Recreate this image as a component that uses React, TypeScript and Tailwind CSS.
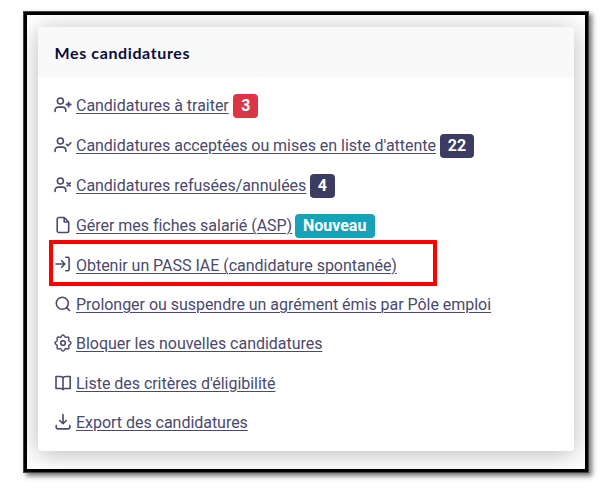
import type { ReactNode } from "react";

const Icon = ({ children }: { children: ReactNode }) => (
  <svg
    viewBox="0 0 18 18"
    className="h-[18px] w-[18px] shrink-0"
    fill="none"
    stroke="currentColor"
    strokeWidth="1.6"
    strokeLinecap="round"
    strokeLinejoin="round"
  >
    {children}
  </svg>
);

const person = (
  <>
    <circle cx="6.4" cy="5" r="3" />
    <path d="M1.1 15.5v-1.2a3.2 3.2 0 0 1 3.2-3.2h4.3a3.2 3.2 0 0 1 3.2 3.2v1.2" />
  </>
);

// Outline of a gear with eight rounded teeth.
const gearPoints = Array.from({ length: 96 }, (_, i) => {
  const angle = (i / 96) * Math.PI * 2;
  const radius = 7.1 + 0.85 * Math.cos(8 * angle);
  return `${(9 + radius * Math.sin(angle)).toFixed(2)},${(9 - radius * Math.cos(angle)).toFixed(2)}`;
}).join(" ");

const icons = {
  add: <Icon>{person}<path strokeWidth="1.8" d="M14.6 6.3v4.4M12.4 8.5h4.4" /></Icon>,
  check: <Icon>{person}<path d="m12.5 8.4 1.4 1.4 2.9-2.9" /></Icon>,
  cross: <Icon>{person}<path strokeWidth="1.7" d="m13.1 6.8 3.1 3.1M16.2 6.8l-3.1 3.1" /></Icon>,
  file: <Icon><path d="M10.2 1.5H4.9a1.7 1.7 0 0 0-1.7 1.7v11.6a1.7 1.7 0 0 0 1.7 1.7h8.1a1.7 1.7 0 0 0 1.7-1.7V6zM10.2 1.5V6h4.5" /></Icon>,
  enter: <Icon><path d="M1.9 9h8.9M7.6 5.7 10.9 9l-3.3 3.3M11.8 2.3h2.1c.8 0 1.2.4 1.2 1.2v11c0 .8-.4 1.2-1.2 1.2h-2.1" /></Icon>,
  search: <Icon><circle cx="8.3" cy="8.3" r="6" /><path d="m12.6 12.6 2.9 2.9" /></Icon>,
  gear: (
    <Icon>
      <circle cx="9" cy="9" r="2.3" />
      <polygon strokeWidth="1.4" points={gearPoints} />
    </Icon>
  ),
  book: <Icon><path d="M9 4.2v11.6M9 4.2C8.6 2.9 7.8 2.5 6.5 2.5H2v12h5c1.1 0 2 .3 2 1.3 0-1 .9-1.3 2-1.3h5.2v-12h-4.7C10.2 2.5 9.4 2.9 9 4.2Z" /></Icon>,
  download: <Icon><path d="M9 1.5v9.2M5.7 7.5 9 10.8l3.3-3.3M2.2 12.5v1.8c0 1.1.7 1.6 1.8 1.6h10c1.1 0 1.8-.5 1.8-1.6v-1.8" /></Icon>,
};

type Item = {
  icon: ReactNode;
  label: string;
  badge?: string;
  badgeStyle?: string;
  highlighted?: boolean;
};

const items: Item[] = [
  { icon: icons.add, label: "Candidatures à traiter", badge: "3", badgeStyle: "bg-[#dc3545] w-[25px] ml-[4.5px]" },
  { icon: icons.check, label: "Candidatures acceptées ou mises en liste d'attente", badge: "22", badgeStyle: "bg-[#3c3b62] w-[34px] ml-[4px]" },
  { icon: icons.cross, label: "Candidatures refusées/annulées", badge: "4", badgeStyle: "bg-[#3c3b62] w-[25px] ml-[3.5px]" },
  { icon: icons.file, label: "Gérer mes fiches salarié (ASP)", badge: "Nouveau", badgeStyle: "bg-[#17a2b8] w-[80px] ml-[2.5px]" },
  { icon: icons.enter, label: "Obtenir un PASS IAE (candidature spontanée)", highlighted: true },
  { icon: icons.search, label: "Prolonger ou suspendre un agrément émis par Pôle emploi" },
  { icon: icons.gear, label: "Bloquer les nouvelles candidatures" },
  { icon: icons.book, label: "Liste des critères d'éligibilité" },
  { icon: icons.download, label: "Export des candidatures" },
];

function Row({ item }: { item: Item }) {
  return (
    <li className={`relative flex items-center ${item.badge ? "h-10" : "h-[39.5px]"}`}>
      <span className="-mt-0.5 mr-1 flex">{item.icon}</span>
      <a className={`whitespace-nowrap tracking-[-0.03px] underline decoration-1 underline-offset-2 ${item.badge || item.highlighted ? "mt-px" : ""}`}>
        {item.label}
      </a>
      {item.badge && (
        <span className={`mt-px flex h-6 items-center justify-center rounded-[4px] font-bold text-white ${item.badgeStyle}`}>
          {item.badge}
        </span>
      )}
      {item.highlighted && (
        <span className="pointer-events-none absolute -left-[5px] -top-[5.5px] h-[46px] w-[388px] border-4 border-[#ff0000]" />
      )}
    </li>
  );
}

export default function App() {
  return (
    <main className="h-[493px] w-[603px] bg-white pl-[23px] pt-[11px] font-['Roboto','Liberation_Sans',sans-serif]">
      <div className="h-[462px] w-[566px] border border-[#444] bg-black p-[3px] shadow-[3px_3px_5px_rgba(0,0,0,0.55)]">
        <div className="h-[454px] w-[558px] overflow-hidden bg-white pl-[11px] pt-[12px]">
          <section className="h-[424px] w-[536px] overflow-hidden rounded-[4px] bg-white shadow-[0_3px_24px_rgba(0,0,0,0.28)]">
            <h2 className="flex h-[50px] items-center bg-[#f9f9f9] pl-[16.5px] pt-[2px] font-['Lato','Liberation_Sans',sans-serif] text-[16px] font-bold tracking-[0.62px] text-[#0b0b3b]">
              Mes candidatures
            </h2>
            <ul className="pl-4 pt-[8.5px] text-[16px] leading-6 text-[#4a496e]">
              {items.map((item) => (
                <Row key={item.label} item={item} />
              ))}
            </ul>
          </section>
        </div>
      </div>
    </main>
  );
}
